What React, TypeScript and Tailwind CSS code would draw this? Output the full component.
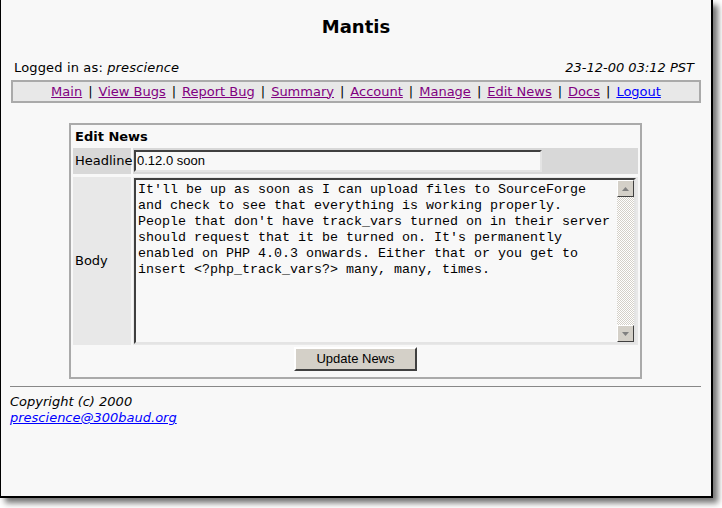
import React from 'react'

const navLinks = [
  { label: 'Main', visited: true },
  { label: 'View Bugs', visited: true },
  { label: 'Report Bug', visited: true },
  { label: 'Summary', visited: true },
  { label: 'Account', visited: true },
  { label: 'Manage', visited: true },
  { label: 'Edit News', visited: true },
  { label: 'Docs', visited: true },
  { label: 'Logout', visited: false },
]

const bodyLines = [
  "It'll be up as soon as I can upload files to SourceForge",
  'and check to see that everything is working properly.',
  "People that don't have track_vars turned on in their server",
  "should request that it be turned on. It's permanently",
  'enabled on PHP 4.0.3 onwards. Either that or you get to',
  'insert <?php_track_vars?> many, many, times.',
]

function Arrow({ up }: { up?: boolean }) {
  return (
    <div className="w-[17px] h-[17px] bg-[#d4d0c8] border border-t-white border-l-white border-r-[#404040] border-b-[#404040] flex items-center justify-center">
      <svg width="7" height="4" viewBox="0 0 7 4">
        <path d={up ? 'M3.5 0 L7 4 L0 4 Z' : 'M0 0 L7 0 L3.5 4 Z'} fill="#808080" />
      </svg>
    </div>
  )
}

export default function App() {
  return (
    <div className="w-[722px] h-[508px] bg-white overflow-hidden">
      <div className="w-[713px] h-[498px] bg-[#f8f8f8] border-l border-r-2 border-b-2 border-black shadow-[5px_5px_6px_rgba(0,0,0,0.55)] flex flex-col font-['DejaVu_Sans',sans-serif] text-[13px] text-black">
        {/* header */}
        <div className="mt-[16px] text-center text-[18px] leading-[22px] font-bold">Mantis</div>

        <div className="mt-[22px] flex justify-between pl-[13px] pr-[17px] leading-[16px]">
          <span className="tracking-[0.15px]">
            Logged in as: <i>prescience</i>
          </span>
          <i>23-12-00 03:12 PST</i>
        </div>

        <div className="mt-[4px] ml-[10px] w-[690px] h-[23px] border-2 border-[#aaaaaa] bg-[#e8e8e8] flex items-center justify-center leading-[18px]">
          {navLinks.map((l, i) => (
            <span key={l.label} className="whitespace-pre">
              {i > 0 && <span className="mx-[6px]">|</span>}
              <a href="#" className={`underline ${l.visited ? 'text-[#800080]' : 'text-[#0000ff]'}`}>
                {l.label}
              </a>
            </span>
          ))}
        </div>

        {/* edit news */}
        <div className="mt-[20px] ml-[68px] w-[573px] h-[256px] border-2 border-[#aaaaaa] px-[2px] flex flex-col">
          <div className="pt-[4px] pb-[3px] pl-[2px] leading-[16px] font-bold">Edit News</div>

          <div className="flex gap-[2px] h-[26px]">
            <div className="w-[58px] bg-[#d8d8d8] pl-[2px] flex items-center">Headline</div>
            <div className="flex-1 bg-[#d8d8d8] flex items-center pl-[1px]">
              <div className="w-[408px] h-[22px] border-2 border-t-[#404040] border-l-[#404040] border-r-[#e4e4e4] border-b-[#e4e4e4] bg-[#f8f8f8] flex items-center pl-[1px] font-['Liberation_Sans',sans-serif] text-[13px]">
                0.12.0 soon
              </div>
            </div>
          </div>

          <div className="flex gap-[2px] h-[168px] mt-[3px]">
            <div className="w-[58px] bg-[#e8e8e8] pl-[2px] flex items-center">Body</div>
            <div className="flex-1 bg-[#e8e8e8] pl-[1px] pt-[1px]">
              <div className="w-[502px] h-[166px] border-2 border-t-[#404040] border-l-[#404040] border-r-[#e4e4e4] border-b-[#e4e4e4] bg-[#f8f8f8] flex">
                <div className="flex-1 pl-[2px] pt-[2px] font-['Liberation_Mono',monospace] text-[13.33px] leading-[16px] whitespace-pre">
                  {bodyLines.join('\n')}
                </div>
                <div className="w-[17px] flex flex-col bg-[repeating-conic-gradient(#d4d0c8_0%_25%,#ffffff_0%_50%)] bg-[length:2px_2px]">
                  <Arrow up />
                  <div className="flex-1" />
                  <Arrow />
                </div>
              </div>
            </div>
          </div>

          <div className="flex justify-center mt-[2px]">
            <button className="w-[123px] h-[24px] bg-[#d4d0c8] border-2 border-t-white border-l-white border-r-[#404040] border-b-[#404040] font-['Liberation_Sans',sans-serif] text-[13px] leading-[18px]">
              Update News
            </button>
          </div>
        </div>

        {/* footer */}
        <hr className="mt-[7px] ml-[9px] mr-[10px] border-t border-[#888888]" />
        <div className="mt-[7px] ml-[9px] leading-[16px] italic">
          <div>Copyright (c) 2000</div>
          <a href="#" className="underline text-[#0000ff]">
            prescience@300baud.org
          </a>
        </div>
      </div>
    </div>
  )
}
